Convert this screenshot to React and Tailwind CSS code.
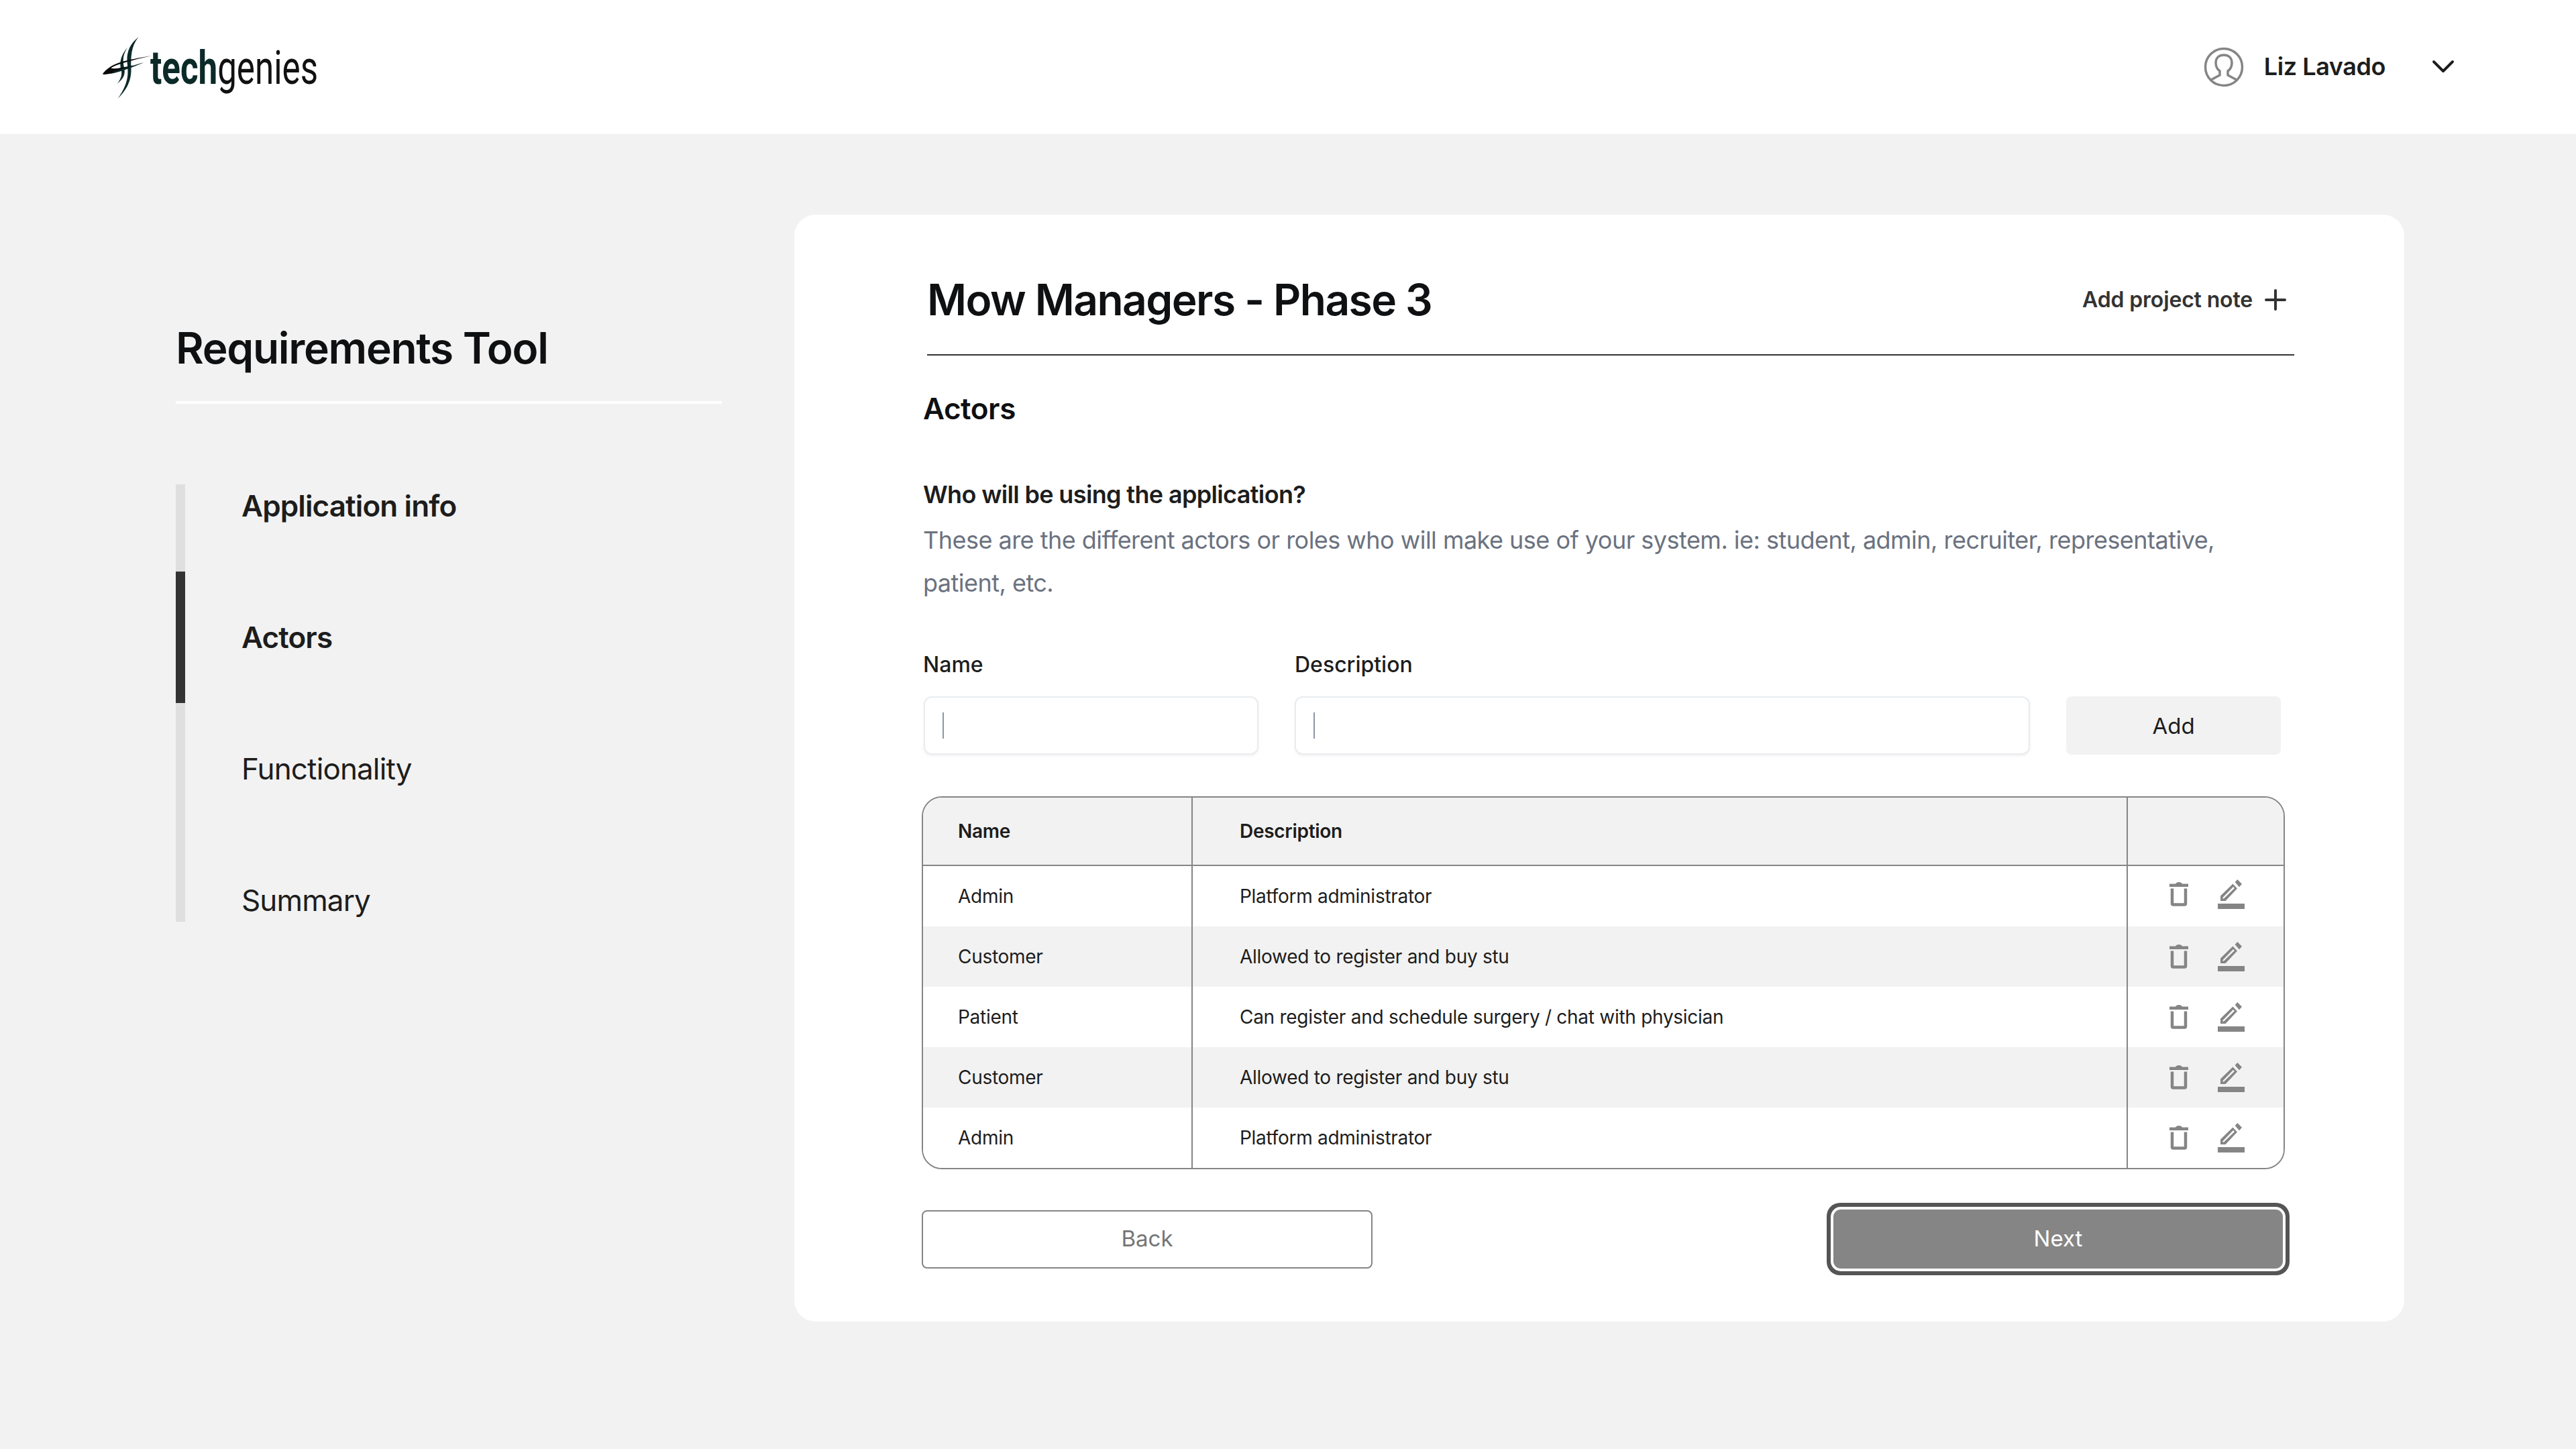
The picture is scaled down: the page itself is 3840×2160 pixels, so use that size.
import { ChevronDown, Plus } from "lucide-react";

const ROWS = [
  { name: "Admin", desc: "Platform administrator" },
  { name: "Customer", desc: "Allowed to register and buy stu" },
  { name: "Patient", desc: "Can register and schedule surgery / chat with physician" },
  { name: "Customer", desc: "Allowed to register and buy stu" },
  { name: "Admin", desc: "Platform administrator" },
];

function LogoMark() {
  return (
    <svg className="w-[77px] h-[95px] shrink-0" viewBox="90 70 230 285">
      <path d="M256 74C222 100 203 135 205 180C207 225 222 265 163 350C192 320 225 280 223 215C221 165 222 115 256 74Z" fill="#0b2a28" />
      <path d="M207 120C180 150 168 185 178 220C184 240 178 262 160 282C190 262 198 238 192 212C184 178 186 150 207 120Z" fill="#0b2a28" />
      <path d="M315 157C250 170 170 178 125 210C108 222 98 233 96 240C125 245 175 224 232 200C190 208 150 220 133 212C165 192 250 172 315 157Z" fill="#0a0a0a" />
      <path d="M280 188C245 196 200 212 150 226L130 238C180 230 235 206 280 188Z" fill="#0b2a28" />
    </svg>
  );
}

function UserIcon() {
  return (
    <svg className="w-[60px] h-[60px] mt-[2px]" viewBox="0 0 60 60" fill="none" stroke="#858585" strokeWidth="3.5">
      <circle cx="30" cy="30" r="27.5" />
      <path d="M11 49L24 42V36C20 33 18 28 18 24C18 16 23 12 30 12C37 12 42 16 42 24C42 28 40 33 36 36V42L49 49" />
    </svg>
  );
}

function TrashIcon() {
  return (
    <svg className="w-[28px] h-[36px]" viewBox="0 0 28 36" fill="#858585">
      <path d="M0 2.5H9C10 1 11 0 14 0C17 0 18 1 19 2.5H28V7H0Z" />
      <path d="M4 9.5V32C4 33 4.5 33.5 5.5 33.5H22.5C23.5 33.5 24 33 24 32V9.5" fill="none" stroke="#858585" strokeWidth="4.5" />
    </svg>
  );
}

function PencilIcon() {
  return (
    <svg className="w-[40px] h-[44px]" viewBox="0 0 40 44" fill="#858585">
      <path d="M4 32V24.5L22.5 6.5L29 13.5L11.5 32ZM7.5 28.5H9L25 13L23 11L7.5 27Z" fillRule="evenodd" />
      <path d="M29.3 0L36 6.7L32 11.3L25.7 4Z" />
      <rect x="0" y="36" width="40" height="8" />
    </svg>
  );
}

function TextInput({ className }) {
  return (
    <div className={`h-[87px] bg-white border-2 border-[#e9ecef] rounded-[12px] shadow-[0_2px_4px_rgba(0,0,0,0.06)] flex items-center px-[26px] ${className}`}>
      <div className="w-[2px] h-[39px] bg-[#8a97a5]" />
    </div>
  );
}

export default function App() {
  return (
    <div className="w-[3840px] h-[2160px] bg-[#f2f2f2] font-[Inter,sans-serif] text-[#1d1d1d] overflow-hidden">
      {/* Header */}
      <header className="h-[200px] bg-white flex items-center pl-[152px] pr-[170px]">
        <div className="flex items-center -ml-[1px] mt-[2px]">
          <LogoMark />
          <div className="w-[250px] -ml-[4px] text-[70px] leading-none font-[Roboto,sans-serif] text-[#0b2a28] whitespace-nowrap origin-left scale-x-[0.73]">
            <span className="font-bold">tech</span>
            <span className="text-[#111111]">genies</span>
          </div>
        </div>
        <div className="ml-auto flex items-center -mt-[2px]">
          <UserIcon />
          <span className="ml-[30px] text-[36px] font-semibold tracking-[-0.012em]">Liz Lavado</span>
          <ChevronDown className="ml-[58px] w-[56px] h-[56px] text-[#1d1d1d]" strokeWidth={1.7} />
        </div>
      </header>

      <div className="flex items-start">
        {/* Sidebar */}
        <aside className="ml-[262px] w-[814px] mt-[272px] shrink-0">
          <h1 className="h-[94px] text-[64px] leading-[94px] font-semibold tracking-[-0.02em] text-[#0f1012]">Requirements Tool</h1>
          <div className="h-[4px] mt-[32px] bg-white" />
          <div className="flex mt-[120px]">
            <div className="w-[14px] flex flex-col">
              <div className="h-[130px] bg-[#dfdfdf]" />
              <div className="h-[196px] bg-[#333333]" />
              <div className="h-[326px] bg-[#dfdfdf]" />
            </div>
            <nav className="ml-[84px] flex flex-col gap-[132px] text-[44px] tracking-[-0.02em]">
              <div className="h-[64px] leading-[64px] font-semibold">Application info</div>
              <div className="h-[64px] leading-[64px] font-semibold">Actors</div>
              <div className="h-[64px] leading-[64px]">Functionality</div>
              <div className="h-[64px] leading-[64px]">Summary</div>
            </nav>
          </div>
        </aside>

        {/* Card */}
        <main className="ml-[108px] mt-[120px] w-[2400px] h-[1650px] bg-white rounded-[32px] pl-[192px] pt-[80px]">
          <div className="ml-[6px] w-[2038px] h-[130px] border-b-2 border-[#333333] flex">
            <div className="h-[94px] leading-[94px] text-[64px] font-semibold tracking-[-0.024em] text-[#0f1012]">Mow Managers - Phase 3</div>
            <div className="ml-auto mr-[4px] h-[94px] flex items-center text-[32px] font-semibold tracking-[-0.005em] text-[#333333]">
              Add project note
              <Plus className="ml-[10px] w-[48px] h-[48px]" strokeWidth={2} />
            </div>
          </div>

          <h2 className="mt-[51px] h-[56px] leading-[56px] text-[44px] font-semibold tracking-[-0.01em] text-[#0f1012]">Actors</h2>
          <p className="mt-[75px] h-[50px] leading-[50px] text-[36px] font-semibold tracking-[-0.018em]">Who will be using the application?</p>
          <p className="mt-[11px] w-[2000px] text-[36px] leading-[64px] tracking-[-0.0145em] text-[#6b7280]">
            These are the different actors or roles who will make use of your system. ie: student, admin, recruiter, representative, patient, etc.
          </p>

          <div className="mt-[68px] flex">
            <div className="w-[554px]">
              <label className="block h-[44px] leading-[44px] text-[32px] font-medium">Name</label>
              <TextInput className="mt-[25px] w-[499px] ml-[1px]" />
            </div>
            <div>
              <label className="block h-[44px] leading-[44px] text-[32px] font-medium">Description</label>
              <div className="mt-[25px] flex">
                <TextInput className="w-[1096px]" />
                <button className="ml-[54px] w-[320px] h-[87px] pt-[2px] rounded-[8px] bg-[#f2f2f2] text-[33px]">Add</button>
              </div>
            </div>
          </div>

          {/* Table */}
          <div className="mt-[62px] -ml-[2px] w-[2032px] border-2 border-[#858585] rounded-[30px] overflow-hidden text-[28px] tracking-[-0.01em]">
            <div className="h-[102px] flex bg-[#f2f2f2] border-b-2 border-[#858585] font-semibold">
              <div className="w-[402px] shrink-0 border-r-2 border-[#858585] pl-[52px] flex items-center">Name</div>
              <div className="w-[1394px] shrink-0 border-r-2 border-[#858585] pl-[70px] flex items-center">Description</div>
              <div className="flex-1" />
            </div>
            {ROWS.map((row, i) => (
              <div key={i} className={`h-[90px] flex ${i % 2 === 1 ? "bg-[#f2f2f2]" : "bg-white"}`}>
                <div className="w-[402px] shrink-0 border-r-2 border-[#858585] pl-[52px] flex items-center">{row.name}</div>
                <div className="w-[1394px] shrink-0 border-r-2 border-[#858585] pl-[70px] flex items-center">{row.desc}</div>
                <div className={`flex-1 flex items-center pl-[62px] gap-[44px] ${i === 0 ? "pb-[6px]" : ""}`}>
                  <TrashIcon />
                  <PencilIcon />
                </div>
              </div>
            ))}
          </div>

          {/* Actions */}
          <div className="mt-[50px] -ml-[2px] w-[2039px] flex items-center justify-between">
            <button className="w-[672px] h-[87px] bg-white border-2 border-[#858585] rounded-[8px] text-[33px] text-[#757575]">Back</button>
            <button className="w-[690px] h-[108px] rounded-[20px] bg-[#555555] p-[6px]">
              <div className="w-full h-full rounded-[15px] bg-white p-[4px]">
                <div className="w-full h-full rounded-[11px] bg-[#858585] flex items-center justify-center text-[33px] text-white">Next</div>
              </div>
            </button>
          </div>
        </main>
      </div>
    </div>
  );
}
